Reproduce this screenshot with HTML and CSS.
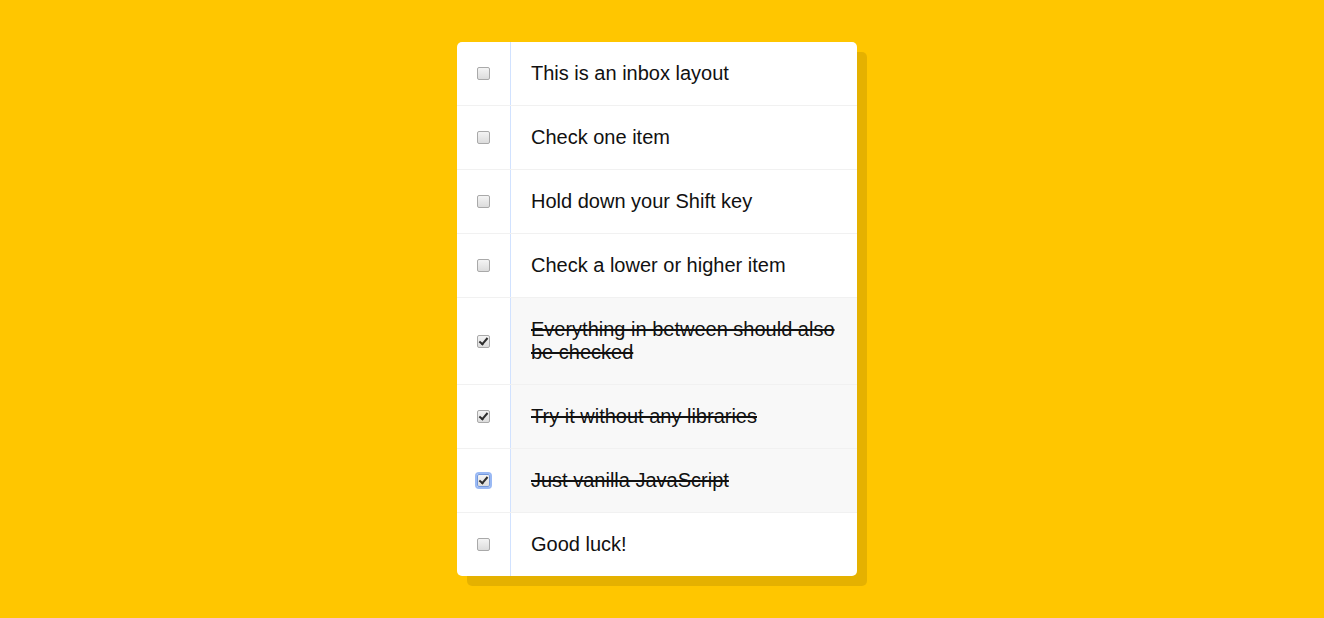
FILE: index.html
```html
<!DOCTYPE html>
<html>
<head>
<meta charset="utf-8">
<title>Hold Shift to Check Multiple Checkboxes</title>
<link rel="stylesheet" href="styles.css">
</head>
<body>
<div class="inbox">
  <div class="item"><input type="checkbox" class="box"><p class="label">This is an inbox layout</p></div>
  <div class="item"><input type="checkbox" class="box"><p class="label">Check one item</p></div>
  <div class="item"><input type="checkbox" class="box"><p class="label">Hold down your Shift key</p></div>
  <div class="item"><input type="checkbox" class="box"><p class="label">Check a lower or higher item</p></div>
  <div class="item"><input type="checkbox" class="box" checked><p class="label">Everything in between should also be checked</p></div>
  <div class="item"><input type="checkbox" class="box" checked><p class="label">Try it without any libraries</p></div>
  <div class="item"><input type="checkbox" class="box box-focus" checked><p class="label">Just vanilla JavaScript</p></div>
  <div class="item"><input type="checkbox" class="box"><p class="label">Good luck!</p></div>
</div>
</body>
</html>
```
FILE: styles.css
```css
html {
  background: #ffc600;
  font-family: "Liberation Sans", Arial, sans-serif;
}

body {
  margin: 0;
  padding: 42px 10px 30px 0;
}

.inbox {
  width: 400px;
  margin: 0 auto;
  background: #ffffff;
  border-radius: 5px;
  box-shadow: 10px 10px 0 rgba(0, 0, 0, 0.1);
}

.item {
  display: flex;
  align-items: center;
  border-bottom: 1px solid #f1f1f1;
}

.item:last-child {
  border-bottom: 0;
}

.box {
  -webkit-appearance: none;
  appearance: none;
  box-sizing: border-box;
  width: 13px;
  height: 13px;
  margin: 20px;
  flex: none;
  position: relative;
  border: 1px solid #a9a9a9;
  border-radius: 2px;
  background: linear-gradient(#f4f4f4, #dcdcdc);
}

.box:checked::after {
  content: "";
  position: absolute;
  left: 3px;
  top: 0px;
  width: 3px;
  height: 7px;
  border-right: 2px solid #2e2e2e;
  border-bottom: 2px solid #2e2e2e;
  transform: rotate(40deg);
}

.box-focus {
  box-shadow: 0 0 0 2px #9ab9f4;
  border-color: #7398dc;
}

.label {
  margin: 0;
  padding: 20px;
  flex: 1;
  font-size: 20px;
  line-height: 23px;
  color: #111111;
  border-left: 1px solid #d1e2ff;
}

.box:checked + .label {
  background: #f8f8f8;
  text-decoration: line-through;
}
```
